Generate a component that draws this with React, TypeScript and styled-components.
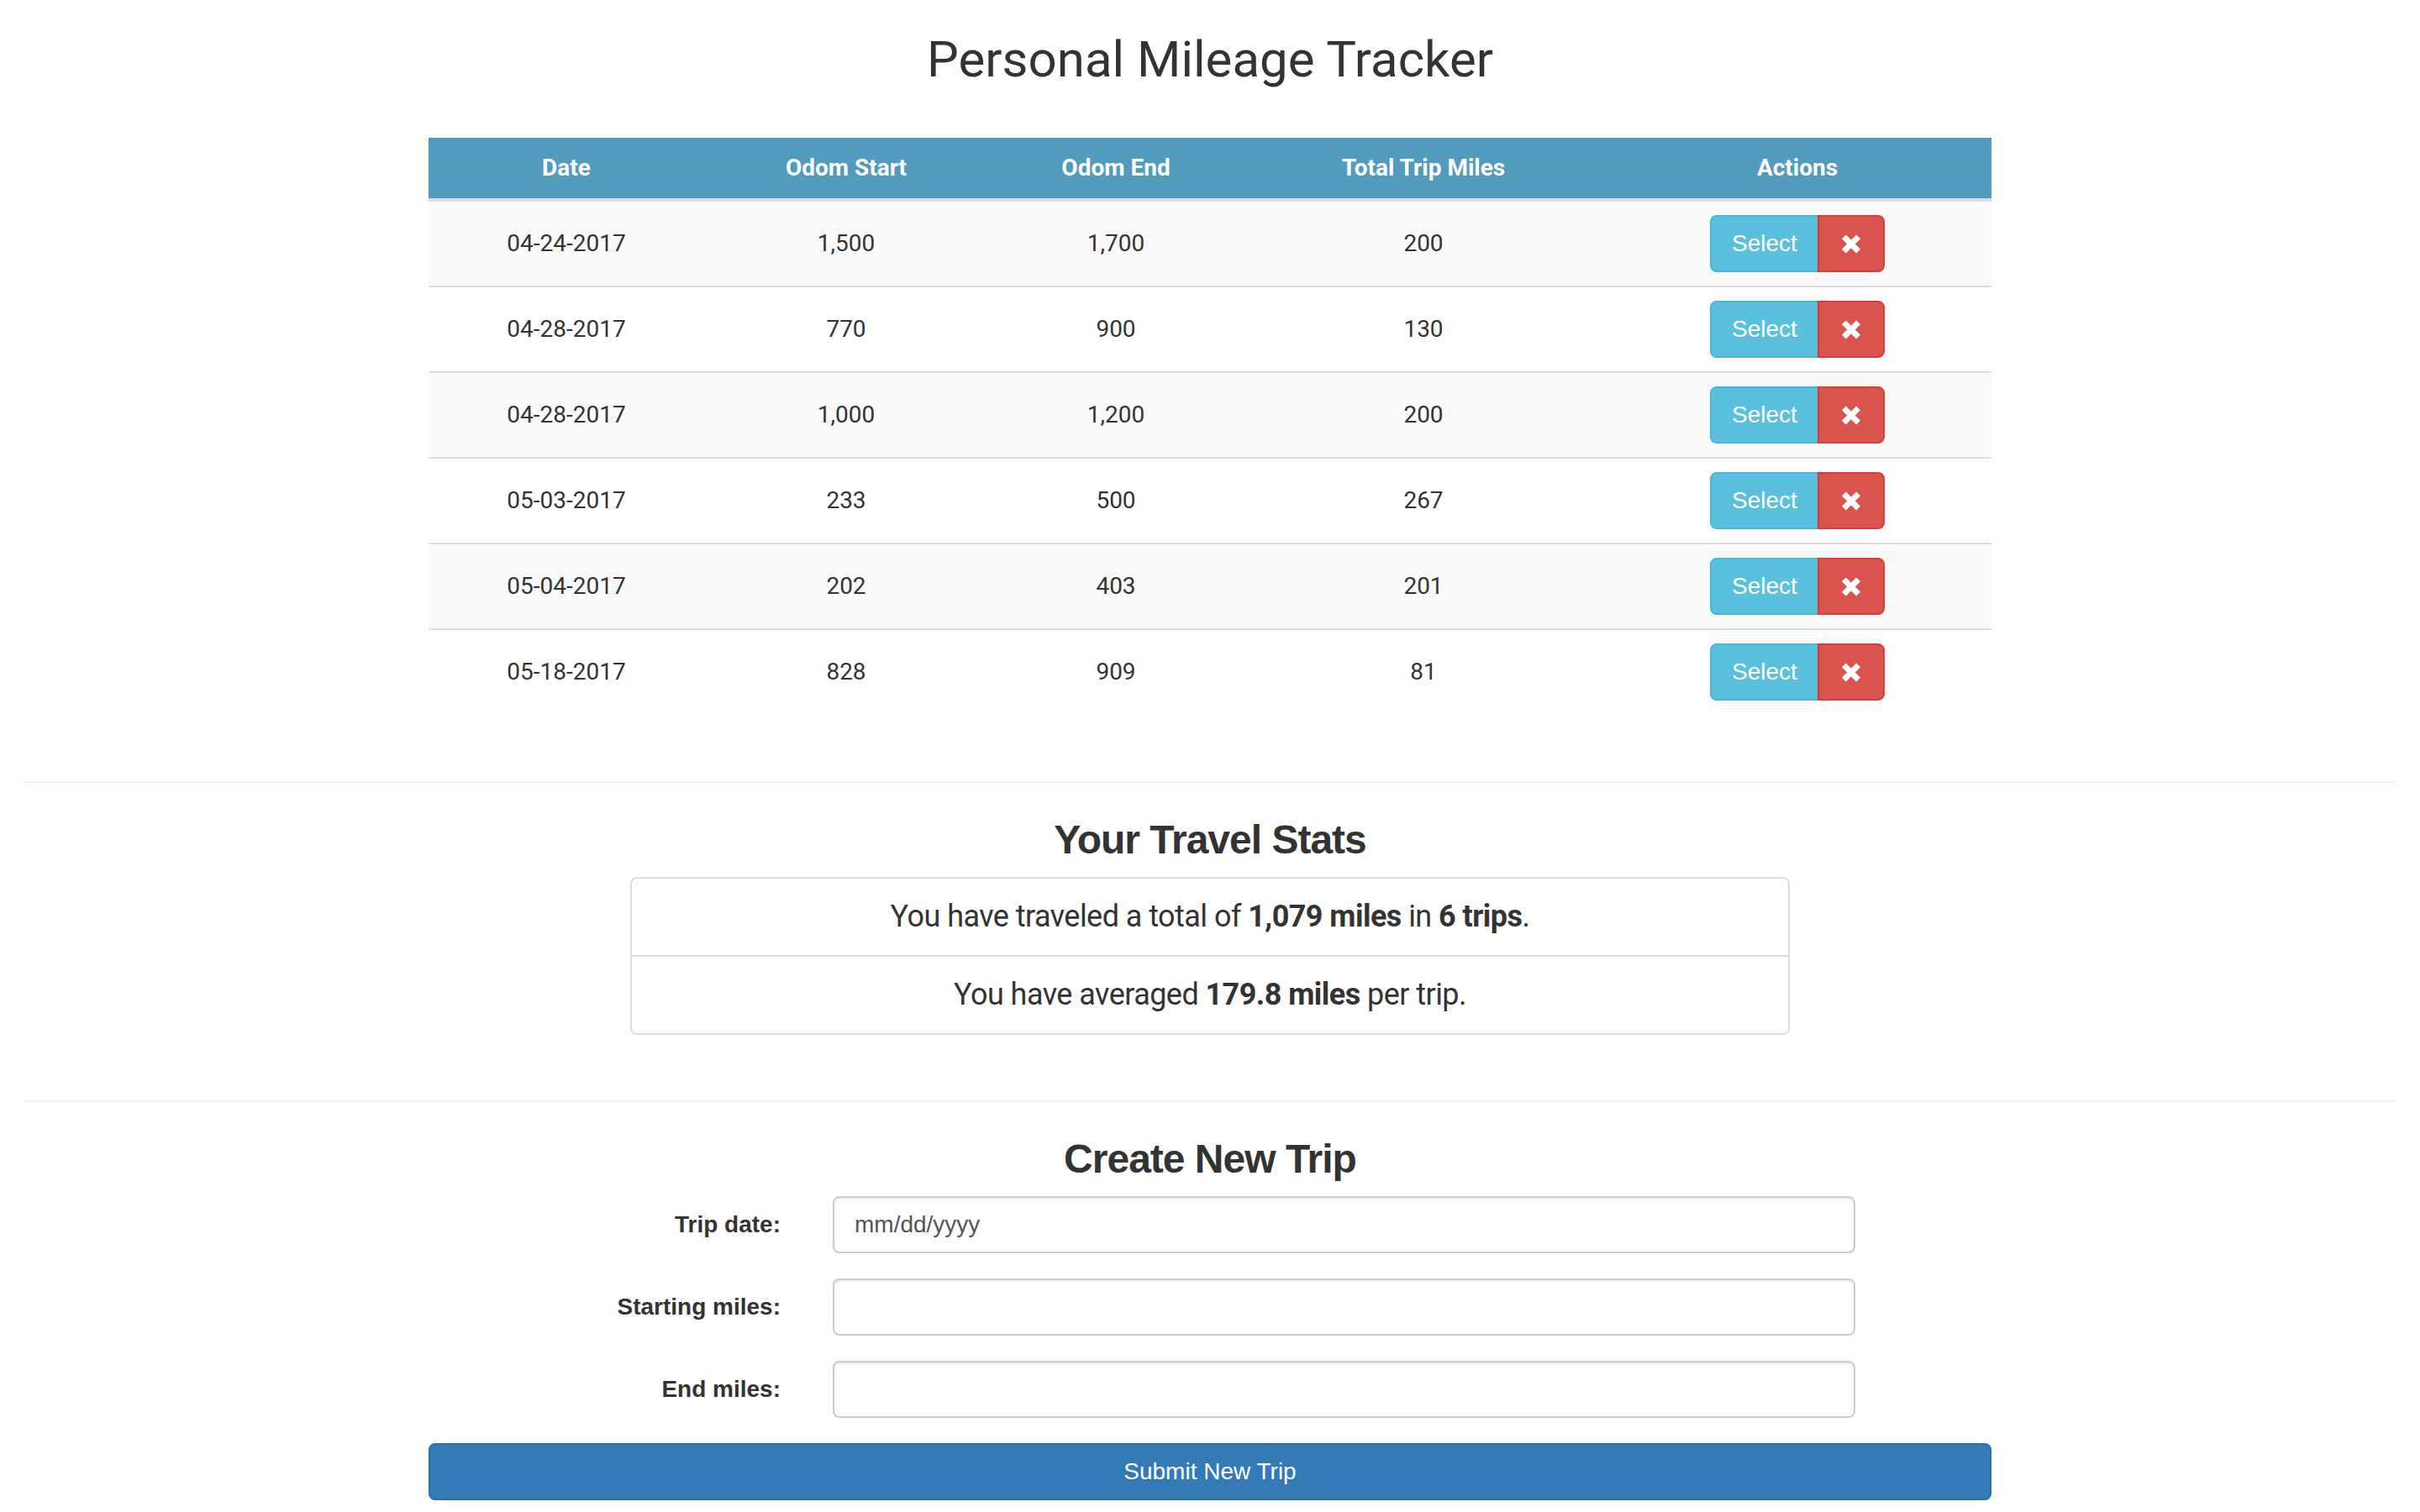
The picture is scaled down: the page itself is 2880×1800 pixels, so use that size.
import React from "react";
import styled, { createGlobalStyle } from "styled-components";

const GlobalStyle = createGlobalStyle`
  html, body { margin: 0; padding: 0; background: #fff; }
  body {
    font-family: "Liberation Sans", Arial, Helvetica, sans-serif;
    font-size: 28px;
    line-height: 1.42857;
    color: #333;
  }
  *, *::before, *::after { box-sizing: border-box; }
`;

const Page = styled.div`
  padding: 0 30px 40px;
`;

const Title = styled.h1`
  margin: 38px 0 60px;
  font-family: Roboto, "Liberation Sans", sans-serif;
  font-weight: 400;
  font-size: 60px;
  line-height: 66px;
  text-align: center;
  color: #333;
`;

const Table = styled.table`
  width: 1860px;
  margin: 0 auto 80px;
  border-collapse: collapse;
  table-layout: fixed;
  font-family: Roboto, "Liberation Sans", sans-serif;
`;

const HeadCell = styled.th<{ $w: number }>`
  width: ${(p) => p.$w}px;
  background: #519bbd;
  color: #fff;
  font-weight: 700;
  font-size: 28px;
  line-height: 40px;
  padding: 16px;
  text-align: center;
  border-bottom: 4px solid #ddd;
`;

const Row = styled.tr<{ $striped: boolean }>`
  background: ${(p) => (p.$striped ? "#f9f9f9" : "#fff")};
`;

const Cell = styled.td`
  padding: 16px;
  font-size: 28px;
  line-height: 40px;
  color: #333;
  text-align: center;
  vertical-align: middle;
  border-top: 2px solid #ddd;
`;

const BtnGroup = styled.div`
  display: inline-flex;
  vertical-align: middle;
`;

const Btn = styled.button<{ $kind: "info" | "danger" }>`
  display: inline-flex;
  align-items: center;
  justify-content: center;
  height: 68px;
  padding: 12px 24px;
  font-family: "Liberation Sans", Arial, Helvetica, sans-serif;
  font-size: 28px;
  line-height: 40px;
  color: #fff;
  cursor: pointer;
  background: ${(p) => (p.$kind === "info" ? "#5bc0de" : "#d9534f")};
  border: 2px solid ${(p) => (p.$kind === "info" ? "#46b8da" : "#d43f3a")};
  border-radius: ${(p) => (p.$kind === "info" ? "8px 0 0 8px" : "0 8px 8px 0")};
  margin-left: ${(p) => (p.$kind === "info" ? "0" : "-2px")};
`;

const IconBox = styled.span`
  display: inline-flex;
  width: 28px;
  justify-content: center;
`;

const Divider = styled.hr`
  margin: 0;
  border: 0;
  border-top: 2px solid #eee;
`;

const SectionTitle = styled.h3<{ $after: number }>`
  margin: 41px 0 ${(p) => p.$after}px;
  font-family: "Liberation Sans", Arial, Helvetica, sans-serif;
  font-weight: 700;
  font-size: 48px;
  line-height: 53px;
  letter-spacing: -1px;
  text-align: center;
  color: #333;
`;

const StatsList = styled.ul`
  width: 1380px;
  margin: 0 auto 78px;
  padding: 0;
  list-style: none;
  font-family: Roboto, "Liberation Sans", sans-serif;
`;

const StatsItem = styled.li`
  padding: 20px 30px;
  font-size: 36px;
  line-height: 51px;
  letter-spacing: -0.55px;
  text-align: center;
  color: #333;
  border: 2px solid #ddd;
  margin-bottom: -2px;
  &:first-child { border-radius: 8px 8px 0 0; }
  &:last-child { border-radius: 0 0 8px 8px; margin-bottom: 0; }
  b { font-weight: 700; }
`;

const Form = styled.form`
  width: 1860px;
  margin: 0 auto;
  display: flex;
  flex-direction: column;
  gap: 30px;
`;

const FormRow = styled.div`
  display: grid;
  grid-template-columns: 419px 1217px;
  column-gap: 62px;
  align-items: center;
`;

const Label = styled.label`
  text-align: right;
  font-weight: 700;
  font-size: 28px;
  line-height: 40px;
  color: #333;
`;

const Input = styled.input`
  height: 68px;
  width: 100%;
  padding: 12px 24px;
  font-family: "Liberation Sans", Arial, Helvetica, sans-serif;
  font-size: 28px;
  line-height: 40px;
  color: #555;
  background: #fff;
  border: 2px solid #ccc;
  border-radius: 8px;
  box-shadow: inset 0 2px 2px rgba(0, 0, 0, 0.075);
  outline: none;
  &::placeholder { color: #555; opacity: 1; }
`;

const Submit = styled.button`
  height: 68px;
  width: 100%;
  font-family: "Liberation Sans", Arial, Helvetica, sans-serif;
  font-size: 28px;
  line-height: 40px;
  color: #fff;
  background: #337ab7;
  border: 2px solid #2e6da4;
  border-radius: 8px;
  cursor: pointer;
`;

const RemoveIcon = () => (
  <svg width="24" height="23" viewBox="0 0 24 24" aria-hidden="true">
    <path d="M3 3 L21 21 M21 3 L3 21" stroke="#fff" strokeWidth="7.2" strokeLinecap="butt" fill="none" />
  </svg>
);

const trips = [
  ["04-24-2017", "1,500", "1,700", "200"],
  ["04-28-2017", "770", "900", "130"],
  ["04-28-2017", "1,000", "1,200", "200"],
  ["05-03-2017", "233", "500", "267"],
  ["05-04-2017", "202", "403", "201"],
  ["05-18-2017", "828", "909", "81"],
];

const columns: [string, number][] = [
  ["Date", 328],
  ["Odom Start", 338],
  ["Odom End", 304],
  ["Total Trip Miles", 428],
  ["Actions", 462],
];

export default function App() {
  return (
    <>
      <GlobalStyle />
      <Page>
        <Title>Personal Mileage Tracker</Title>
        <Table>
          <thead>
            <tr>
              {columns.map(([name, w]) => (
                <HeadCell key={name} $w={w}>
                  {name}
                </HeadCell>
              ))}
            </tr>
          </thead>
          <tbody>
            {trips.map((t, i) => (
              <Row key={i} $striped={i % 2 === 0}>
                {t.map((v, j) => (
                  <Cell key={j}>{v}</Cell>
                ))}
                <Cell>
                  <BtnGroup>
                    <Btn type="button" $kind="info">Select</Btn>
                    <Btn type="button" $kind="danger">
                      <IconBox>
                        <RemoveIcon />
                      </IconBox>
                    </Btn>
                  </BtnGroup>
                </Cell>
              </Row>
            ))}
          </tbody>
        </Table>
        <Divider />
        <SectionTitle $after={18}>Your Travel Stats</SectionTitle>
        <StatsList>
          <StatsItem>
            You have traveled a total of <b>1,079 miles</b> in <b>6 trips</b>.
          </StatsItem>
          <StatsItem>
            You have averaged <b>179.8 miles</b> per trip.
          </StatsItem>
        </StatsList>
        <Divider />
        <SectionTitle $after={18}>Create New Trip</SectionTitle>
        <Form onSubmit={(e) => e.preventDefault()}>
          <FormRow>
            <Label htmlFor="tripDate">Trip date:</Label>
            <Input id="tripDate" type="text" placeholder="mm/dd/yyyy" />
          </FormRow>
          <FormRow>
            <Label htmlFor="startMiles">Starting miles:</Label>
            <Input id="startMiles" type="text" />
          </FormRow>
          <FormRow>
            <Label htmlFor="endMiles">End miles:</Label>
            <Input id="endMiles" type="text" />
          </FormRow>
          <Submit type="submit">Submit New Trip</Submit>
        </Form>
      </Page>
    </>
  );
}
